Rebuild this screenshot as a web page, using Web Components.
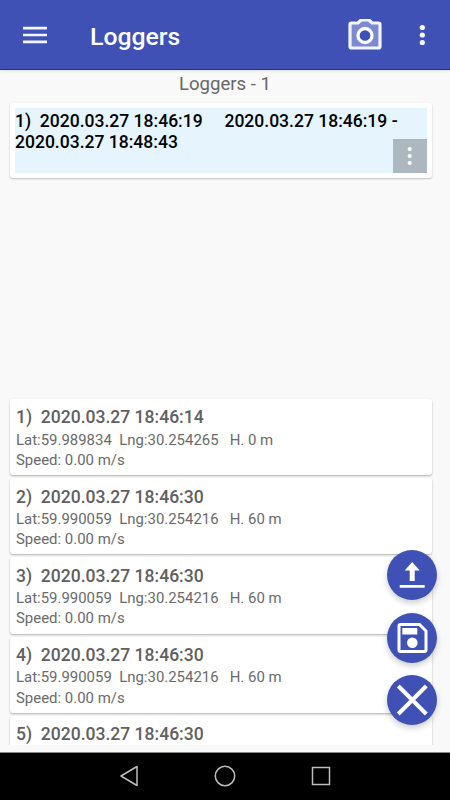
<!DOCTYPE html>
<html lang="en">
<head>
<meta charset="utf-8">
<meta name="viewport" content="width=device-width, initial-scale=1">
<title>Loggers</title>
<style>
  body { margin: 0; background: #f9f9f9; font-family: Roboto, "Liberation Sans", sans-serif; }
</style>
</head>
<body>
<loggers-app></loggers-app>

<script>
class AppBar extends HTMLElement {
  connectedCallback() {
    this.attachShadow({ mode: 'open' });
    this.shadowRoot.innerHTML = `
      <style>
        :host {
          display: flex; align-items: center; box-sizing: border-box; flex: none;
          height: 70px; padding: 0 25px 0 23px;
          background: #3f51b5; border-bottom: 1px solid #17309a; color: #fff;
          box-shadow: 0 1px 3px rgba(0,0,0,.1);
        }
        svg { display: block; flex: none; }
        h1 { flex: 1; margin: 4px 0 0 43px; font-size: 24.8px; line-height: 30px; font-weight: 500; }
        .more { margin-left: 37px; }
      </style>
      <svg width="24" height="18" fill="#f3f5ff"><path d="M0 .8h24v2.600H0zM0 7.700h24v2.600H0zM0 14.600h24v2.600H0z"/></svg>
      <h1><slot></slot></h1>
      <svg width="34" height="32" viewBox="0 0 34 32">
        <path d="M2 5.500q0-1.500 1.500-1.500H10l3-3h8l3 3h6.500q1.500 0 1.500 1.500v22q0 1.500-1.500 1.500h-27Q2 29 2 27.500z" fill="#7c8ad2" stroke="#f3f5ff" stroke-width="3.200"/>
        <circle cx="17" cy="16.500" r="7" fill="#3f51b5" stroke="#fff" stroke-width="3.300"/>
      </svg>
      <svg class="more" width="6" height="22" fill="#fff"><circle cx="3.300" cy="3.500" r="2.600"/><circle cx="3.300" cy="11" r="2.600"/><circle cx="3.300" cy="18.500" r="2.600"/></svg>`;
  }
}
customElements.define('app-bar', AppBar);

class LoggerCard extends HTMLElement {
  connectedCallback() {
    this.attachShadow({ mode: 'open' });
    this.shadowRoot.innerHTML = `
      <style>
        :host {
          display: block; box-sizing: border-box; flex: none; height: 75px; padding: 5px;
          margin: 7px 18px 0 10px; background: #fff; border-radius: 3px;
          box-shadow: 0 1px 2px rgba(0,0,0,.24);
        }
        .body { position: relative; height: 65px; background: #e6f4fd; }
        .text { white-space: pre; font-size: 17.55px; line-height: 21px; font-weight: 500; color: #000; padding-top: 3px; }
        .menu {
          position: absolute; right: 0; bottom: 0; width: 34px; height: 34px;
          display: flex; align-items: center; justify-content: center; background: #adb7bf;
        }
      </style>
      <div class="body">
        <div class="text"><slot></slot></div>
        <div class="menu"><svg width="6" height="20" fill="#fff"><circle cx="2.700" cy="3" r="2.100"/><circle cx="2.700" cy="10" r="2.100"/><circle cx="2.700" cy="17" r="2.100"/></svg></div>
      </div>`;
  }
}
customElements.define('logger-card', LoggerCard);

class PointCard extends HTMLElement {
  connectedCallback() {
    this.attachShadow({ mode: 'open' });
    this.shadowRoot.innerHTML = `
      <style>
        :host {
          display: block; box-sizing: border-box; flex: none; height: 76.2px; padding: 7.400px 6px 0;
          background: #fff; border-radius: 3px; box-shadow: 0 1px 2px rgba(0,0,0,.3);
          color: #6a6a6a;
        }
        .title, .info { white-space: pre; }
        .title { font-size: 17.55px; line-height: 22px; font-weight: 500; margin-bottom: 1.200px; color: #606060; }
        .info { font-size: 14.95px; line-height: 20.500px; }
      </style>
      <div class="title"><slot name="title"></slot></div>
      <div class="info"><slot name="place"></slot></div>
      <div class="info"><slot name="speed"></slot></div>`;
  }
}
customElements.define('point-card', PointCard);

class FabButton extends HTMLElement {
  connectedCallback() {
    this.attachShadow({ mode: 'open' });
    this.shadowRoot.innerHTML = `
      <style>
        :host {
          display: block; width: 50px; height: 50px; border-radius: 50%;
          background: #3f51b5; box-shadow: 0 3px 6px rgba(0,0,0,.2);
        }
      </style>
      <slot></slot>`;
  }
}
customElements.define('fab-button', FabButton);

class NavBar extends HTMLElement {
  connectedCallback() {
    this.attachShadow({ mode: 'open' });
    this.shadowRoot.innerHTML = `
      <style>
        :host {
          display: flex; align-items: center; justify-content: center; gap: 75px;
          box-sizing: border-box; flex: none; height: 48px; background: #000;
          border-top: 1px solid #888; padding: 0 1px 1px 0;
        }
        svg { display: block; fill: none; stroke: #bdbdbd; stroke-width: 1.5; }
      </style>
      <svg width="20" height="22"><path d="M18 1.500v19L2 11z" stroke-linejoin="round"/></svg>
      <svg width="22" height="22"><circle cx="11" cy="11" r="9.700"/></svg>
      <svg width="20" height="20"><path d="M1.500 1.500h17v17h-17z"/></svg>`;
  }
}
customElements.define('nav-bar', NavBar);

const points = [
  ['1)  2020.03.27 18:46:14', 'Lat:59.989834  Lng:30.254265   H. 0 m'],
  ['2)  2020.03.27 18:46:30', 'Lat:59.990059  Lng:30.254216   H. 60 m'],
  ['3)  2020.03.27 18:46:30', 'Lat:59.990059  Lng:30.254216   H. 60 m'],
  ['4)  2020.03.27 18:46:30', 'Lat:59.990059  Lng:30.254216   H. 60 m'],
  ['5)  2020.03.27 18:46:30', '']
];

class LoggersApp extends HTMLElement {
  connectedCallback() {
    this.attachShadow({ mode: 'open' });
    this.shadowRoot.innerHTML = `
      <style>
        :host { display: flex; flex-direction: column; position: relative; height: 800px; overflow: hidden; background: #f9f9f9; }
        .count { margin-top: 3px; text-align: center; font-size: 18.6px; line-height: 23px; color: #686868; }
        .spacer { flex: 1; }
        .points {
          display: flex; flex-direction: column; gap: 3px; flex: none; box-sizing: border-box;
          height: 349px; padding: 3px 18px 0 10px; margin-bottom: 7px; overflow: hidden;
        }
        .fabs { position: absolute; right: 13px; top: 550px; display: flex; flex-direction: column; gap: 12.500px; }
        svg { display: block; }
      </style>
      <app-bar>Loggers</app-bar>
      <div class="count">Loggers - 1</div>
      <logger-card>1)  2020.03.27 18:46:19     2020.03.27 18:46:19 -\n2020.03.27 18:48:43</logger-card>
      <div class="spacer"></div>
      <div class="points">
        ${points.map(([title, place]) => `<point-card><span slot="title">${title}</span>${place ? `<span slot="place">${place}</span><span slot="speed">Speed: 0.00 m/s</span>` : ''}</point-card>`).join('')}
      </div>
      <nav-bar></nav-bar>
      <div class="fabs">
        <fab-button><svg width="50" height="50" fill="#fff"><path d="M25.200 12l7.500 8.500h-5V31h-5V20.500h-5zM12.700 35h25v2.800h-25z"/></svg></fab-button>
        <fab-button><svg width="50" height="50">
          <path d="M13.500 11.500H32.500L39 18v19q0 1.500-1.500 1.500h-24Q12 38.500 12 37V13q0-1.500 1.500-1.500z" fill="none" stroke="#fff" stroke-width="3"/>
          <path d="M15.300 15h15v6.500h-15z" fill="#fff"/><circle cx="25.300" cy="29.700" r="5.300" fill="#fff"/>
        </svg></fab-button>
        <fab-button><svg width="50" height="50"><path d="M11.300 11l28 28M39.300 11l-28 28" stroke="#fff" stroke-width="4"/></svg></fab-button>
      </div>`;
  }
}
customElements.define('loggers-app', LoggersApp);
</script>
</body>
</html>
